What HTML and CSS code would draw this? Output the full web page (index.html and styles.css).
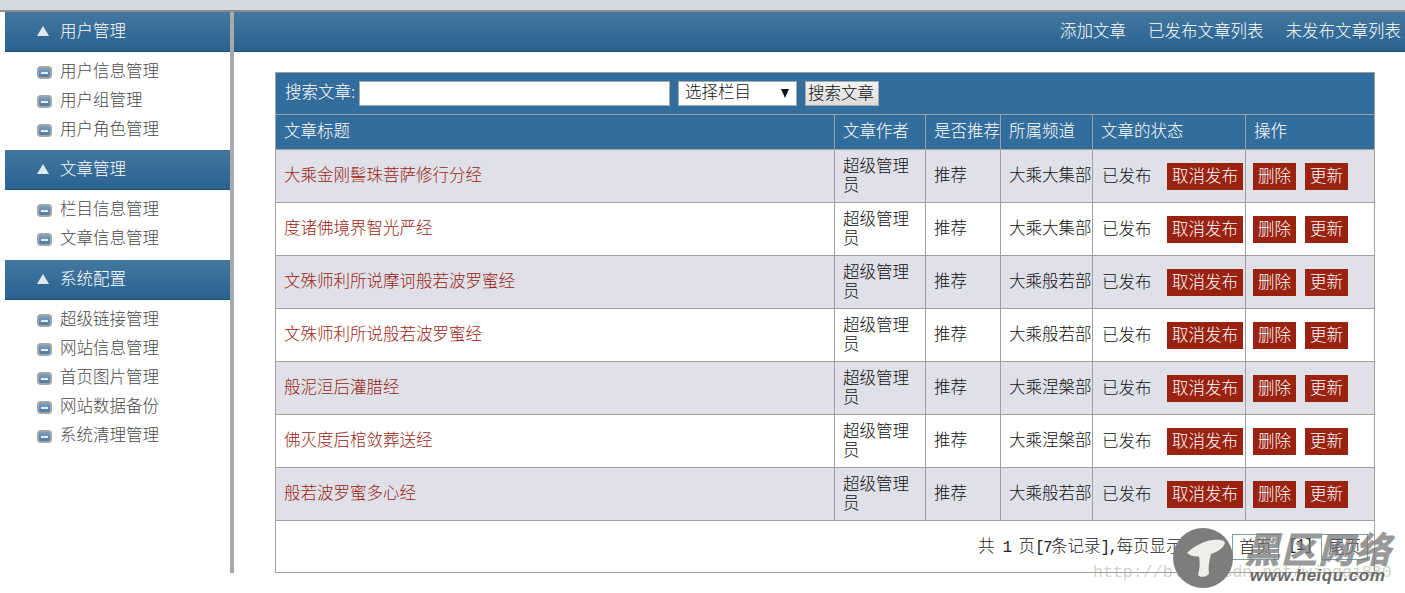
FILE: index.html

```html
<!DOCTYPE html>
<html>
<head>
    <title>文章信息管理</title>
    <meta charset="UTF-8">
    <link rel="stylesheet" href="styles.css">
</head>
<body>
    <div class="top-strip"></div>
    <div class="layout">
        <div class="sidebar">
            <div class="side-head"><span class="arrow"></span><span>用户管理</span></div>
            <ul class="side-list">
                <li><span class="bullet"></span>用户信息管理</li>
                <li><span class="bullet"></span>用户组管理</li>
                <li><span class="bullet"></span>用户角色管理</li>
            </ul>
            <div class="side-head"><span class="arrow"></span><span>文章管理</span></div>
            <ul class="side-list side-list-short">
                <li><span class="bullet"></span>栏目信息管理</li>
                <li><span class="bullet"></span>文章信息管理</li>
            </ul>
            <div class="side-head"><span class="arrow"></span><span>系统配置</span></div>
            <ul class="side-list">
                <li><span class="bullet"></span>超级链接管理</li>
                <li><span class="bullet"></span>网站信息管理</li>
                <li><span class="bullet"></span>首页图片管理</li>
                <li><span class="bullet"></span>网站数据备份</li>
                <li><span class="bullet"></span>系统清理管理</li>
            </ul>
        </div>
        <div class="main">
            <div class="main-head">
                <a href="#">添加文章</a>
                <a href="#">已发布文章列表</a>
                <a href="#">未发布文章列表</a>
            </div>
            <div class="content">
                <table class="grid">
                    <colgroup>
                        <col class="c-title">
                        <col class="c-author">
                        <col class="c-rec">
                        <col class="c-channel">
                        <col class="c-status">
                        <col class="c-ops">
                    </colgroup>
                    <tr class="search-row">
                        <td colspan="6">
                            <div class="search-form">
                                <label>搜索文章:</label>
                                <input type="text" class="search-input">
                                <div class="fake-select">选择栏目<span class="caret"></span></div>
                                <button class="search-btn">搜索文章</button>
                            </div>
                        </td>
                    </tr>
                    <tr class="head-row">
                        <td>文章标题</td>
                        <td>文章作者</td>
                        <td>是否推荐</td>
                        <td>所属频道</td>
                        <td>文章的状态</td>
                        <td>操作</td>
                    </tr>
                    <tr class="odd">
                        <td><a href="#" class="title">大乘金刚髻珠菩萨修行分经</a></td>
                        <td class="author">超级管理员</td>
                        <td>推荐</td>
                        <td class="nowrap">大乘大集部</td>
                        <td class="status"><div class="status-box"><span>已发布</span><a href="#" class="btn">取消发布</a></div></td>
                        <td class="ops"><a href="#" class="btn">删除</a><a href="#" class="btn">更新</a></td>
                    </tr>
                    <tr>
                        <td><a href="#" class="title">度诸佛境界智光严经</a></td>
                        <td class="author">超级管理员</td>
                        <td>推荐</td>
                        <td class="nowrap">大乘大集部</td>
                        <td class="status"><div class="status-box"><span>已发布</span><a href="#" class="btn">取消发布</a></div></td>
                        <td class="ops"><a href="#" class="btn">删除</a><a href="#" class="btn">更新</a></td>
                    </tr>
                    <tr class="odd">
                        <td><a href="#" class="title">文殊师利所说摩诃般若波罗蜜经</a></td>
                        <td class="author">超级管理员</td>
                        <td>推荐</td>
                        <td class="nowrap">大乘般若部</td>
                        <td class="status"><div class="status-box"><span>已发布</span><a href="#" class="btn">取消发布</a></div></td>
                        <td class="ops"><a href="#" class="btn">删除</a><a href="#" class="btn">更新</a></td>
                    </tr>
                    <tr>
                        <td><a href="#" class="title">文殊师利所说般若波罗蜜经</a></td>
                        <td class="author">超级管理员</td>
                        <td>推荐</td>
                        <td class="nowrap">大乘般若部</td>
                        <td class="status"><div class="status-box"><span>已发布</span><a href="#" class="btn">取消发布</a></div></td>
                        <td class="ops"><a href="#" class="btn">删除</a><a href="#" class="btn">更新</a></td>
                    </tr>
                    <tr class="odd">
                        <td><a href="#" class="title">般泥洹后灌腊经</a></td>
                        <td class="author">超级管理员</td>
                        <td>推荐</td>
                        <td class="nowrap">大乘涅槃部</td>
                        <td class="status"><div class="status-box"><span>已发布</span><a href="#" class="btn">取消发布</a></div></td>
                        <td class="ops"><a href="#" class="btn">删除</a><a href="#" class="btn">更新</a></td>
                    </tr>
                    <tr>
                        <td><a href="#" class="title">佛灭度后棺敛葬送经</a></td>
                        <td class="author">超级管理员</td>
                        <td>推荐</td>
                        <td class="nowrap">大乘涅槃部</td>
                        <td class="status"><div class="status-box"><span>已发布</span><a href="#" class="btn">取消发布</a></div></td>
                        <td class="ops"><a href="#" class="btn">删除</a><a href="#" class="btn">更新</a></td>
                    </tr>
                    <tr class="odd">
                        <td><a href="#" class="title">般若波罗蜜多心经</a></td>
                        <td class="author">超级管理员</td>
                        <td>推荐</td>
                        <td class="nowrap">大乘般若部</td>
                        <td class="status"><div class="status-box"><span>已发布</span><a href="#" class="btn">取消发布</a></div></td>
                        <td class="ops"><a href="#" class="btn">删除</a><a href="#" class="btn">更新</a></td>
                    </tr>
                    <tr class="pager-row">
                        <td colspan="6">
                            <div class="pager">
                                <span>共<span class="lat"> 1 </span>页<span class="lat">[7</span>条记录<span class="lat">],</span>每页显示<span class="lat">15</span>条<span class="lat">,</span></span>
                                <a href="#" class="page-link">首页</a>
                                <span class="lat">[1]</span>
                                <a href="#" class="page-link">尾页</a>
                            </div>
                        </td>
                    </tr>
                </table>
            </div>
        </div>
    </div>

    <div class="mark-url">http://blog.csdn.net/wjnqqi880</div>
    <div class="mark">
        <svg class="mark-logo" width="60" height="60" viewBox="0 0 60 60">
            <circle cx="30" cy="30" r="30" fill="#7d7d7d"/>
            <path d="M14 25 C20 19 30 13 40 12 C46 11 52 12 52 15 C51 19 45 24 38 26 C30 29 19 30 14 25 Z" fill="#f0eeea"/>
            <path d="M26 28 L38 26 C36 33 35 40 36 45 C35 49 27 50 25 47 C27 40 27 34 26 28 Z" fill="#f0eeea"/>
        </svg>
        <div class="mark-text">
            <div class="mark-name">黑区网络</div>
            <div class="mark-site">www.heiqu.com</div>
        </div>
    </div>
</body>
</html>
```

FILE: styles.css

```css
html, body { margin: 0; padding: 0; }
body {
    background: #fff;
    height: 593px;
    overflow: hidden;
    font-family: "Noto Sans CJK SC", "Liberation Sans", sans-serif;
    font-size: 16.5px;
    font-weight: 300;
    color: #111;
    position: relative;
}
a { text-decoration: none; }

.top-strip {
    height: 10px;
    background: #d3dbe3;
    border-bottom: 2px solid #8c8c8c;
}
.layout { display: flex; padding-left: 5px; height: 561px; }

/* sidebar */
.sidebar {
    width: 225px;
    flex: none;
    border-right: 4px solid #a9a9a9;
}
.side-head {
    height: 39px;
    background: linear-gradient(#43779f, #2a6290);
    border-bottom: 1px solid #1c4f78;
    color: #fff;
    display: flex;
    align-items: center;
    padding-left: 32px;
}
.side-head span:last-child { position: relative; top: -2px; }
.arrow {
    width: 0;
    height: 0;
    border-left: 6.5px solid transparent;
    border-right: 6.5px solid transparent;
    border-bottom: 10px solid #dfe9f0;
    margin-right: 10px;
    margin-top: -2px;
    margin-left: 0;
}
.side-head .arrow { margin-right: 11px; }
.side-list {
    list-style: none;
    margin: 0;
    padding: 5px 0 6px 32px;
    color: #4a4a4a;
}
.side-list-short { padding-bottom: 7px; }
.side-list li {
    height: 29px;
    box-sizing: border-box;
    padding-bottom: 4px;
    display: flex;
    align-items: center;
}
.bullet {
    width: 15px;
    height: 13px;
    box-sizing: border-box;
    background: linear-gradient(#7ba0bf, #4d7ba1);
    border: 2px solid #a5a5a5;
    border-radius: 4px;
    margin-right: 8px;
    margin-top: 6px;
    display: flex;
    align-items: center;
    justify-content: center;
}
.bullet::after {
    content: "";
    display: block;
    width: 7px;
    height: 2px;
    background: #e6edf3;
}

/* main */
.main { flex: 1; min-width: 0; }
.main-head {
    height: 39px;
    background: linear-gradient(#43779f, #2a6290);
    border-bottom: 1px solid #1c4f78;
    display: flex;
    justify-content: flex-end;
    align-items: center;
    gap: 22px;
    padding-right: 4px;
}
.main-head a { color: #fff; position: relative; top: -2px; }
.content { padding: 20px 30px 0 41px; }

/* table */
.grid {
    width: 1099px;
    table-layout: fixed;
    border-collapse: collapse;
}
.c-title { width: 559px; }
.c-author { width: 91px; }
.c-rec { width: 75px; }
.c-channel { width: 92px; }
.c-status { width: 153px; }
.c-ops { width: 129px; }
.grid td {
    border: 1px solid #a0a0a0;
    padding: 0 0 4px 8px;
    line-height: 19px;
    box-sizing: border-box;
    height: 53px;
    overflow: hidden;
}
.grid tr.search-row td {
    height: 42px;
    padding-bottom: 0;
    background: #336d9c;
    color: #fff;
}
.grid tr.head-row td {
    height: 35px;
    background: #336d9c;
    color: #fff;
    white-space: nowrap;
}
.grid tr.odd td { background: #e0e0e9; }
.grid tr.pager-row td { height: 52px; padding-bottom: 0; }
.grid td.nowrap { white-space: nowrap; }
.grid td.author { padding-right: 8px; padding-bottom: 2px; }
.grid td.status { padding: 0 0 0 9px; }
.grid td.ops { padding: 0 0 0 7px; }

.search-form { display: flex; align-items: center; padding-left: 1px; }
.search-form label { width: 74px; white-space: nowrap; position: relative; top: -2px; }
.search-input {
    width: 311px;
    height: 25px;
    box-sizing: border-box;
    border: 1px solid #a8a8a8;
    background: #fff;
    padding: 0;
    margin: 0;
}
.fake-select {
    width: 119px;
    height: 25px;
    line-height: 19px;
    box-sizing: border-box;
    margin-left: 8px;
    padding-left: 6px;
    background: #fff;
    border: 1px solid #a8a8a8;
    color: #111;
    position: relative;
}
.caret {
    position: absolute;
    right: 7px;
    top: 7px;
    width: 0;
    height: 0;
    border-left: 4.5px solid transparent;
    border-right: 4.5px solid transparent;
    border-top: 9px solid #111;
}
.search-btn {
    width: 74px;
    height: 25px;
    box-sizing: border-box;
    margin-left: 8px;
    padding: 0 2px 3px 0;
    border: 1px solid #a8a8a8;
    background: linear-gradient(#f2f2f2, #dcdcdc);
    color: #111;
    font: inherit;
    line-height: 19px;
}

.title { color: #9a2412; }
.status-box { display: flex; align-items: center; justify-content: space-between; padding-right: 2px; }
.status-box span { position: relative; top: -1px; }
.btn {
    display: inline-block;
    height: 27px;
    line-height: 24px;
    padding: 0 5px;
    background: #992211;
    color: #fff;
    white-space: nowrap;
}
.ops .btn { margin-right: 9px; }

.pager {
    display: flex;
    justify-content: flex-end;
    align-items: center;
    margin-right: 6px;
    white-space: pre;
    color: #222;
}
.lat {
    font-family: "Liberation Mono", monospace;
    font-size: 16px;
    letter-spacing: -1.6px;
}
.page-link {
    border: 1px solid #7aa3a0;
    width: 47px;
    height: 26px;
    line-height: 22px;
    box-sizing: border-box;
    text-align: center;
    color: #222;
    margin: 0 9px;
}
.page-link:last-child { margin-right: 0; }

/* watermark over the corner */
.mark {
    position: absolute;
    left: 1173px;
    top: 528px;
    display: flex;
    gap: 11px;
    pointer-events: none;
}
.mark-name {
    font-size: 36px;
    line-height: 39px;
    font-weight: 900;
    font-style: italic;
    color: rgba(120, 120, 120, 0.75);
    letter-spacing: 1px;
    white-space: nowrap;
}
.mark-site {
    font-family: "Liberation Sans", sans-serif;
    font-size: 17px;
    line-height: 18px;
    font-weight: bold;
    font-style: italic;
    color: #6a6a6a;
    white-space: nowrap;
    letter-spacing: 0.5px;
    margin-left: 6px;
}
.mark-url {
    position: absolute;
    left: 1093px;
    top: 563px;
    font-family: "Liberation Mono", monospace;
    font-size: 16.6px;
    line-height: 20px;
    color: rgba(170, 170, 160, 0.55);
    white-space: nowrap;
}
```
